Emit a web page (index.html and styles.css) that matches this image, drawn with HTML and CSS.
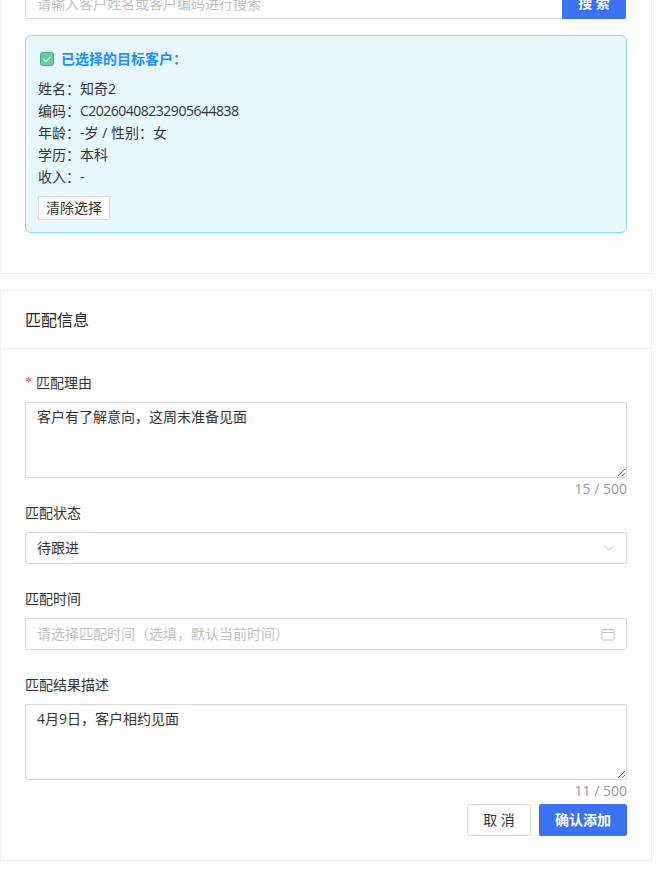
FILE: index.html
```html
<!DOCTYPE html>
<html lang="zh-CN">
<head>
  <meta charset="UTF-8" />
  <meta name="viewport" content="width=device-width, initial-scale=1" />
  <title>添加匹配</title>
  <link rel="stylesheet" href="styles.css">
</head>
<body>
  <main class="page">
    <section class="card card-customer">
      <div class="search-row">
        <input class="input search-input" type="text" placeholder="请输入客户姓名或客户编码进行搜索" />
        <button class="btn btn-primary btn-search">搜 索</button>
      </div>
      <div class="selected-box">
        <div class="selected-title">
          <svg class="check-icon" width="14" height="14" viewBox="0 0 14 14" aria-hidden="true">
            <rect x=".5" y=".5" width="13" height="13" rx="2" fill="#62cf9a" stroke="#45b27f" />
            <path d="M3.5 7.2 6 9.5 10.5 4.8" fill="none" stroke="#f2fbf6" stroke-width="1.2" />
          </svg>
          已选择的目标客户：
        </div>
        <div class="selected-line">姓名：知奇<span class="num">2</span></div>
        <div class="selected-line">编码：<span class="num">C20260408232905644838</span></div>
        <div class="selected-line">年龄：-岁 / 性别：女</div>
        <div class="selected-line">学历：本科</div>
        <div class="selected-line">收入：-</div>
        <button class="btn btn-small">清除选择</button>
      </div>
    </section>

    <section class="card card-match">
      <h2 class="card-head">匹配信息</h2>
      <form class="card-body">
        <div class="form-item">
          <label class="form-label"><span class="required">*</span>匹配理由</label>
          <textarea class="input textarea">客户有了解意向，这周末准备见面</textarea>
          <div class="count">15 / 500</div>
        </div>
        <div class="form-item">
          <label class="form-label">匹配状态</label>
          <div class="input picker">
            <span>待跟进</span>
            <svg class="picker-icon" width="12" height="12" viewBox="0 0 12 12" aria-hidden="true">
              <path d="M1 3.5 6 8.5 11 3.5" fill="none" stroke="#bfbfbf" stroke-width="1" />
            </svg>
          </div>
        </div>
        <div class="form-item">
          <label class="form-label">匹配时间</label>
          <div class="input picker">
            <span class="placeholder">请选择匹配时间（选填，默认当前时间）</span>
            <svg class="picker-icon" width="14" height="14" viewBox="0 0 14 14" aria-hidden="true">
              <path d="M1.5 2.5h11a.5.5 0 0 1 .5.5v9.5a.5.5 0 0 1-.5.5h-11a.5.5 0 0 1-.5-.5V3a.5.5 0 0 1 .5-.5ZM1 5.5h12M4 1v3M10 1v3" fill="none" stroke="#bfbfbf" stroke-width="1" />
            </svg>
          </div>
        </div>
        <div class="form-item">
          <label class="form-label">匹配结果描述</label>
          <textarea class="input textarea">4月9日，客户相约见面</textarea>
          <div class="count">11 / 500</div>
        </div>
        <div class="form-actions">
          <button type="button" class="btn btn-default">取 消</button>
          <button type="button" class="btn btn-primary">确认添加</button>
        </div>
      </form>
    </section>
  </main>
</body>
</html>
```

FILE: styles.css
```css
* {
  box-sizing: border-box;
}
html, body {
  height: 100%;
  overflow: hidden;
}
body {
  margin: 0;
  background: #fdfdfd;
  color: #333;
  font-family: "Open Sans", "Noto Sans CJK SC", sans-serif;
  font-size: 14px;
  line-height: 22px;
}
/* The screenshot is scrolled 14px past the top of the first card */
.page {
  width: 652px;
  margin-top: -14px;
}
.card {
  background: #fff;
  border: 1px solid #f0f0f0;
}
.card-customer {
  padding: 0 24px 40px;
  margin-bottom: 16px;
}
.card-head {
  margin: 0;
  height: 58px;
  padding: 0 24px;
  border-bottom: 1px solid #f0f0f0;
  font-size: 16px;
  font-weight: 400;
  line-height: 58px;
  color: #262626;
}
.card-body {
  padding: 23px 24px 24px;
}
.search-row {
  display: flex;
  margin-bottom: 16px;
}
.input {
  border: 1px solid #d9d9d9;
  border-radius: 2px;
  background: #fff;
  color: #333;
  font: inherit;
  padding: 4px 11px;
  outline: none;
}
.input::placeholder,
.placeholder {
  color: #bfbfbf;
}
.search-input {
  flex: 1;
  height: 32px;
  border-right: none;
  border-radius: 2px 0 0 2px;
}
.btn {
  font: inherit;
  cursor: pointer;
  border-radius: 2px;
  height: 32px;
  padding: 0 15px;
  border: 1px solid #d9d9d9;
  background: #fff;
  color: #333;
}
.btn-primary {
  background: #3b71f3;
  border-color: #3b71f3;
  color: #fff;
  font-weight: 600;
}
.btn-search {
  width: 64px;
  padding: 0;
  margin-right: 1px;
  border-radius: 0 2px 2px 0;
}
.selected-box {
  background: #e6f7ff;
  border: 1px solid #91d5ff;
  border-radius: 6px;
  padding: 12px;
  height: 198px;
}
.selected-title {
  display: flex;
  align-items: center;
  color: #1890ff;
  font-weight: 600;
  margin-bottom: 8px;
}
.check-icon {
  margin: 0 7px 0 2px;
}
.selected-line {
  color: #333;
}
/* Latin digits in the original font run narrower than Open Sans */
.num {
  letter-spacing: -0.5px;
}
.btn-small {
  height: 24px;
  padding: 0 7px;
  margin-top: 8px;
  line-height: 22px;
}
.form-item {
  position: relative;
  margin-bottom: 24px;
}
.form-label {
  display: flex;
  align-items: center;
  height: 22px;
  margin-bottom: 8px;
}
.required {
  color: #e5484d;
  margin-right: 4px;
  font-family: SimSun, "Liberation Serif", serif;
}
.textarea {
  display: block;
  width: 100%;
  height: 76px;
  padding-top: 3px;
  resize: vertical;
}
.count {
  position: absolute;
  right: 0;
  bottom: -22px;
  color: #999;
}
.picker {
  display: flex;
  justify-content: space-between;
  align-items: center;
  height: 32px;
}
.form-actions {
  display: flex;
  justify-content: flex-end;
  gap: 8px;
}
.btn-default {
  width: 64px;
  padding: 0;
}
```
